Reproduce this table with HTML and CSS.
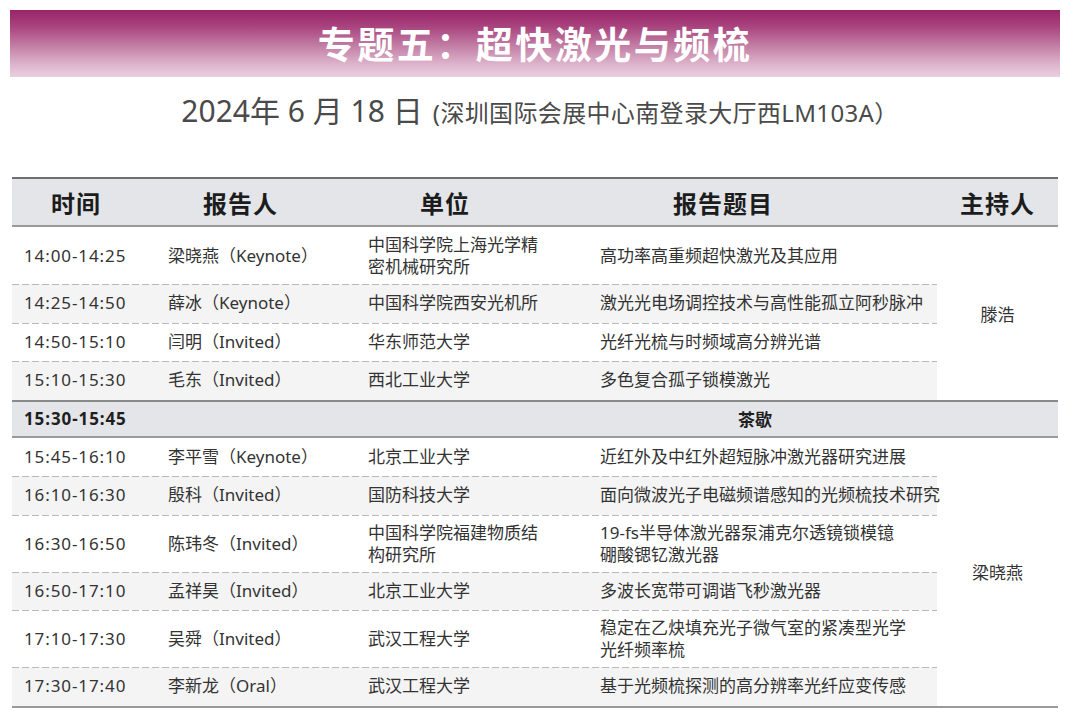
FILE: index.html
```html
<!DOCTYPE html>
<html lang="zh-CN">
<head>
<meta charset="utf-8">
<title>专题五：超快激光与频梳</title>
<link rel="stylesheet" href="styles.css">
</head>
<body>
<div class="page">
  <div class="banner"><h1 class="banner-title">专题五：超快激光与频梳</h1></div>
  <p class="date"><span class="date-main">2024年 6 月 18 日</span> <span class="date-loc">(深圳国际会展中心南登录大厅西LM103A）</span></p>

  <div class="schedule">
    <div class="thead">
      <div class="th th-time">时间</div>
      <div class="th th-speaker">报告人</div>
      <div class="th th-unit">单位</div>
      <div class="th th-title">报告题目</div>
      <div class="th th-host">主持人</div>
    </div>

    <div class="group">
      <div class="rows">
        <div class="row two"><div class="c time">14:00-14:25</div><div class="c">梁晓燕（Keynote）</div><div class="c">中国科学院上海光学精<br>密机械研究所</div><div class="c">高功率高重频超快激光及其应用</div></div>
        <div class="row"><div class="c time">14:25-14:50</div><div class="c">薛冰（Keynote）</div><div class="c">中国科学院西安光机所</div><div class="c">激光光电场调控技术与高性能孤立阿秒脉冲</div></div>
        <div class="row"><div class="c time">14:50-15:10</div><div class="c">闫明（Invited）</div><div class="c">华东师范大学</div><div class="c">光纤光梳与时频域高分辨光谱</div></div>
        <div class="row"><div class="c time">15:10-15:30</div><div class="c">毛东（Invited）</div><div class="c">西北工业大学</div><div class="c">多色复合孤子锁模激光</div></div>
      </div>
      <div class="host">滕浩</div>
    </div>

    <div class="tea">
      <div class="c time bold">15:30-15:45</div>
      <div class="tea-label">茶歇</div>
    </div>

    <div class="group">
      <div class="rows">
        <div class="row"><div class="c time">15:45-16:10</div><div class="c">李平雪（Keynote）</div><div class="c">北京工业大学</div><div class="c">近红外及中红外超短脉冲激光器研究进展</div></div>
        <div class="row"><div class="c time">16:10-16:30</div><div class="c">殷科（Invited）</div><div class="c">国防科技大学</div><div class="c">面向微波光子电磁频谱感知的光频梳技术研究</div></div>
        <div class="row two"><div class="c time">16:30-16:50</div><div class="c">陈玮冬（Invited）</div><div class="c">中国科学院福建物质结<br>构研究所</div><div class="c">19-fs半导体激光器泵浦克尔透镜锁模镱<br>硼酸锶钇激光器</div></div>
        <div class="row"><div class="c time">16:50-17:10</div><div class="c">孟祥昊（Invited）</div><div class="c">北京工业大学</div><div class="c">多波长宽带可调谐飞秒激光器</div></div>
        <div class="row two"><div class="c time">17:10-17:30</div><div class="c">吴舜（Invited）</div><div class="c">武汉工程大学</div><div class="c">稳定在乙炔填充光子微气室的紧凑型光学<br>光纤频率梳</div></div>
        <div class="row"><div class="c time">17:30-17:40</div><div class="c">李新龙（Oral）</div><div class="c">武汉工程大学</div><div class="c">基于光频梳探测的高分辨率光纤应变传感</div></div>
      </div>
      <div class="host">梁晓燕</div>
    </div>
  </div>
</div>
</body>
</html>
```

FILE: styles.css
```css
* { box-sizing: border-box; }

html, body {
  margin: 0;
  padding: 0;
  background: #ffffff;
}

body {
  font-family: "Noto Sans", "Noto Sans CJK SC", sans-serif;
  color: #333333;
}

.page {
  width: 1080px;
  padding: 10px 0 0 0;
}

.banner {
  margin: 0 20px 0 10px;
  height: 67px;
  display: flex;
  align-items: center;
  justify-content: center;
  background: linear-gradient(to bottom, #982468 0%, #a9447f 25%, #c481a7 55%, #dcb2cb 80%, #eacfe0 100%);
}

.banner-title {
  margin: 0;
  font-family: "Noto Sans CJK SC", sans-serif;
  font-size: 37px;
  font-weight: 700;
  letter-spacing: 2.5px;
  color: #ffffff;
  line-height: 1;
}

.date {
  margin: 16px 0 0 0;
  text-align: center;
  color: #4a4a4a;
  line-height: 36px;
  white-space: nowrap;
}

.date-main {
  font-size: 30px;
}

.date-loc {
  font-size: 24px;
  letter-spacing: 0.35px;
  margin-left: 6px;
}

.schedule {
  margin: 43px 0 0 12px;
  width: 1046px;
}

.thead {
  display: grid;
  grid-template-columns: 144px 200px 232px 349px 121px;
  height: 50px;
  align-items: center;
  background: #e3e5e9;
  border-top: 2px solid #6f6f6f;
  border-bottom: 2px solid #9a9a9a;
}

.th {
  font-family: "Noto Sans CJK SC", sans-serif;
  font-size: 24px;
  font-weight: 700;
  letter-spacing: 1px;
  color: #1c1c1c;
}

.th-time { padding-left: 39px; }
.th-speaker { padding-left: 47px; }
.th-unit { padding-left: 64px; }
.th-title { padding-left: 85px; }
.th-host { text-align: center; }

.group {
  display: flex;
}

.rows {
  width: 925px;
}

.row {
  display: grid;
  grid-template-columns: 144px 200px 232px 349px;
  align-items: center;
  padding: 9px 0 9.5px;
  position: relative;
}

.row.two {
  padding: 7px 0 6px;
}

.row:nth-child(even) {
  background: #f4f4f4;
}

.row + .row::before {
  content: "";
  position: absolute;
  left: 0;
  right: 0;
  top: 0;
  height: 1px;
  background: repeating-linear-gradient(to right, #b9b9b9 0 7px, transparent 7px 10px);
}

.c {
  padding-left: 12px;
  font-size: 17px;
  line-height: 20px;
  white-space: nowrap;
  color: #333333;
}

.row.two .c {
  line-height: 22px;
}

.time {
  letter-spacing: 0.9px;
}

.bold {
  font-weight: 700;
  color: #1e1e1e;
}

.host {
  flex: 1;
  display: flex;
  align-items: center;
  justify-content: center;
  font-size: 17px;
  color: #333333;
  background: #ffffff;
}

.tea {
  display: grid;
  grid-template-columns: 144px 200px 232px 349px 121px;
  align-items: center;
  height: 38px;
  background: #e3e5e9;
  border-top: 2px solid #8a8a8a;
  border-bottom: 2px solid #9a9a9a;
}

.tea-label {
  grid-column: 4 / 5;
  text-align: center;
  padding-right: 15px;
  font-family: "Noto Sans CJK SC", sans-serif;
  font-size: 17px;
  font-weight: 700;
  color: #1e1e1e;
}

.schedule > .group:last-child {
  border-bottom: 2px solid #9a9a9a;
}
```
